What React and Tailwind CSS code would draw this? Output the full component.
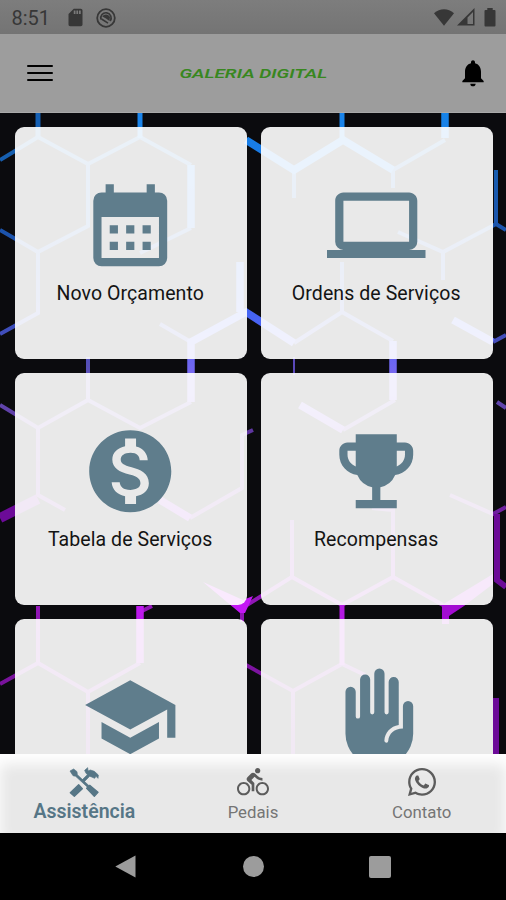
import React from "react";
import {
  MdMonetizationOn,
  MdEmojiEvents,
  MdSchool,
  MdDirectionsBike,
  MdNotifications,
  MdSdCard,
} from "react-icons/md";
import { FaWhatsapp } from "react-icons/fa";

const CalendarIcon = ({ className }) => (
  <svg viewBox="0 0 24 24" fill="currentColor" className={className}>
    <path d="M9 12V14H7V12H9M13 12V14H11V12H13M17 12V14H15V12H17M9 16V18H7V16H9M13 16V18H11V16H13M17 16V18H15V16H17M5 4H6V2H8V4H16V2H18V4H19A2 2 0 0 1 21 6V20A2 2 0 0 1 19 22H5A2 2 0 0 1 3 20V6A2 2 0 0 1 5 4M19 20V10H5V20H19Z" />
  </svg>
);

const LaptopIcon = ({ className }) => (
  <svg viewBox="0 0 24 24" fill="currentColor" className={className}>
    <path d="M4 6H20V16H4M20 18A2 2 0 0 0 22 16V6C22 4.89 21.1 4 20 4H4C2.89 4 2 4.89 2 6V16A2 2 0 0 0 4 18H0V20H24V18H20Z" />
  </svg>
);

const HandIcon = ({ className }) => (
  <svg viewBox="0 0 24 24" fill="currentColor" className={className}>
    <path d="M4.5 5.8a1.25 1.25 0 0 1 2.5 0v6a.53.53 0 0 0 1.06 0V2.8a1.23 1.23 0 0 1 2.46 0v8a.5.5 0 0 0 1 0V1.4a1.25 1.25 0 0 1 2.5 0v9.4a.5.5 0 0 0 1 0V3.4a1.23 1.23 0 0 1 2.46 0V13.9c-2 .3-3.4 1.9-3.5 3.8a.45.45 0 0 0 .95.05c.1-1.7 1.5-3 3.57-3V9.3a1.25 1.25 0 0 1 2.5 0V16a8.25 8 0 0 1-16.5 0z" />
  </svg>
);

const ToolsIcon = ({ className }) => (
  <svg
    viewBox="0 0 90 90"
    fill="currentColor"
    stroke="currentColor"
    strokeWidth="2"
    strokeLinejoin="round"
    className={className}
  >
    <path d="M3 12L14 6L24 14L25 23L62 58L57 62L20 28L12 26Z" />
    <path d="M53 64L62 55L87 76L76 88Z" strokeWidth="4" />
    <path d="M4 77L29 53L40 65L16 88Z" strokeWidth="4" />
    <path d="M56 2L57 12L64 9L76 13L88 24L87 34L81 28L77 34L66 29L62 28L45 45L39 39L55 23L50 17L47 10Z" />
  </svg>
);

const cards = [
  { label: "Novo Orçamento", icon: CalendarIcon },
  { label: "Ordens de Serviços", icon: LaptopIcon },
  { label: "Tabela de Serviços", icon: MdMonetizationOn },
  { label: "Recompensas", icon: MdEmojiEvents },
  { icon: MdSchool },
  { icon: HandIcon },
];

const thinLines = [
  "M38 137L0 160M38 137L88 164L140 137M140 137L191 165M38 252L0 230M88 164V226L38 252V313L0 334M191 228L140 253",
  "M393 170L445 140M294 170V198M393 170V188M342 262V312L393 341M294 343L342 312M398 232L443 252L496 224L506 230M443 252V280M496 170V224M493 342L506 335",
  "M160 324L191 342M88 357V400L38 428L0 405M38 428V495L65 510M88 400L140 428L191 402M190 518L242 488V435L253 430M343 430L395 400",
  "M292 520V577L242 608V622M292 577L342 605L393 577V510L372 508M393 577L443 605M450 495L493 514L506 507M497 402L506 408",
  "M38 606V663L0 684M38 663L88 692L140 663M88 692V754M246 665L293 691L342 664L365 675M293 691V754M140 612L152 606",
];

const thickLines = [
  "M191 165V228M246 140L294 170L343 140L393 170M445 112V138M191 372V342L246 312L294 343M240 262V312",
  "M191 372V402M393 341V400M453 320L493 342M300 405L343 430M160 500L190 518M140 606V663",
];

function HexBackground() {
  return (
    <svg
      viewBox="0 113 506 641"
      fill="none"
      className="absolute inset-0 h-full w-full"
      preserveAspectRatio="none"
    >
      <defs>
        <linearGradient id="neon" gradientUnits="userSpaceOnUse" x1="0" y1="112" x2="0" y2="754">
          <stop offset="0" stopColor="#1583e8" />
          <stop offset="0.22" stopColor="#2468e0" />
          <stop offset="0.33" stopColor="#4a63f5" />
          <stop offset="0.42" stopColor="#7e68ee" />
          <stop offset="0.55" stopColor="#7a2cc0" />
          <stop offset="0.77" stopColor="#c01af0" />
          <stop offset="1" stopColor="#7d10a8" />
        </linearGradient>
      </defs>
      <g stroke="url(#neon)">
        {thinLines.map((d) => (
          <path key={d} d={d} strokeWidth="4" strokeOpacity="0.75" />
        ))}
        {thickLines.map((d) => (
          <path key={d} d={d} strokeWidth="7.5" />
        ))}
      </g>
      {/* brighter tubes at the top edge */}
      <path d="M38 110V138" stroke="#1560b4" strokeWidth="5" />
      <path d="M140 110V138M342 110V140" stroke="#1a84ea" strokeWidth="5" />
      <path d="M294 357V375" stroke="#5a48b8" strokeWidth="2" />
      <path d="M342 604V665" stroke="#b41ae2" strokeWidth="5" />
      <path d="M0 518L38 499" stroke="#6c0b98" strokeWidth="10" />
      <path d="M497 514V580L506 587M496 698V754" stroke="#6c0b98" strokeWidth="6" />
      <path d="M203 582L243 600L253 596L245 613L240 613Z" fill="#c416f5" />
      <path d="M442 605L493 574V584L464 606L449 616V624H442Z" fill="#a30cd2" />
    </svg>
  );
}

function StatusBar() {
  return (
    <div className="flex h-[34px] items-center bg-gradient-to-b from-[#7d7d7d] to-[#747474] pl-[11.5px] pr-[10px] text-[#373737]">
      <span className="mt-[2px] text-[20px] leading-none">8:51</span>
      <MdSdCard className="ml-[15px] h-[21px] w-[21px]" />
      <svg viewBox="0 0 20 20" className="ml-[10px] mt-px h-5 w-5" fill="none" stroke="currentColor">
        <circle cx="10" cy="10" r="8.8" strokeWidth="1.8" />
        <path d="M5 11.5A5.2 5.2 0 1 1 14.2 13" strokeWidth="1.7" />
        <path d="M6.3 8.5C8 5.5 12.5 5.7 14 9L13.4 13L10 10.4Z" fill="currentColor" stroke="none" />
        <path d="M5.5 11L12 15.2" strokeWidth="1.6" />
      </svg>
      <svg viewBox="0 0 20 17" className="ml-auto h-[17px] w-5" fill="currentColor">
        <path d="M0 4.2C6-1 14-1 20 4.2L10 16.7Z" />
      </svg>
      <svg viewBox="0 0 18 18" className="ml-[3px] h-[18px] w-[18px]" fill="currentColor">
        <path d="M17.5 0V17.5H0ZM16 4L10.5 9.5V16H16Z" fillRule="evenodd" />
      </svg>
      <svg viewBox="0 0 12 19" className="ml-[9px] h-[19px] w-3" fill="currentColor">
        <path d="M3.3 0H8.7V2H10.5Q11.5 2 11.5 3V17.5Q11.5 18.5 10.5 18.5H1.5Q.5 18.5 .5 17.5V3Q.5 2 1.5 2H3.3Z" />
      </svg>
    </div>
  );
}

function Header() {
  return (
    <header className="flex h-[79px] items-center justify-between border-b border-[#aaa] bg-[#9d9d9d] pl-[27px] pr-[17px]">
      <button className="flex w-[26px] flex-col gap-[5px]">
        <span className="h-[2px] rounded-full bg-black" />
        <span className="h-[2px] rounded-full bg-black" />
        <span className="h-[2px] rounded-full bg-black" />
      </button>
      <h1 className="ml-[-4px] scale-x-[1.47] text-[13px] font-semibold italic leading-none text-[#38871f]">
        GALERIA DIGITAL
      </h1>
      <button>
        <MdNotifications className="h-8 w-8 text-black" />
      </button>
    </header>
  );
}

function Card({ label, icon: Icon }) {
  return (
    <button className="flex h-[232px] flex-col items-center rounded-[9px] bg-white/91 pt-[48.5px]">
      <Icon className="h-[98.5px] w-[98.5px] text-[#5f7d8c]" />
      {label && (
        <span className="mt-[7.5px] pr-px text-[19.5px] leading-6 tracking-[0.08px] text-[#141414]">
          {label}
        </span>
      )}
    </button>
  );
}

function TabBar() {
  return (
    <nav className="grid h-[79px] grid-cols-3 bg-[#e8e8e8] text-[#5c5c5c] shadow-[inset_0_10px_14px_0px_#ffffff]">
      <div className="flex flex-col items-center pt-[13px] text-[#567686]">
        <ToolsIcon className="h-[30px] w-[30px]" />
        <span className="mt-[3px] text-[19.5px] font-semibold leading-6">Assistência</span>
      </div>
      <div className="flex flex-col items-center pt-3">
        <MdDirectionsBike className="h-8 w-8" />
        <span className="text-[16.8px] leading-7 text-[#757575]">Pedais</span>
      </div>
      <div className="flex flex-col items-center pt-3">
        <FaWhatsapp className="h-8 w-8" />
        <span className="text-[16.8px] leading-7 text-[#757575]">Contato</span>
      </div>
    </nav>
  );
}

function SystemNav() {
  return (
    <div className="grid h-[67px] grid-cols-[1fr_22px_1fr] items-center bg-black text-[#9c9c9c]">
      <svg viewBox="0 0 21 23" className="ml-[115px] h-[23px] w-[21px]" fill="currentColor">
        <path d="M20.5 .5V22.5L.3 11.5Z" />
      </svg>
      <span className="ml-px h-[21px] w-[21px] rounded-full bg-[#9c9c9c]" />
      <span className="ml-[105px] h-[22px] w-[22px] rounded-[2px] bg-[#9c9c9c]" />
    </div>
  );
}

export default function App() {
  return (
    <div className="flex h-[900px] w-[506px] flex-col overflow-hidden bg-black font-['Roboto',sans-serif]">
      <StatusBar />
      <Header />
      <main className="relative min-h-0 flex-1 overflow-hidden bg-[#0b0b0e]">
        <HexBackground />
        <div className="relative grid grid-cols-2 gap-[14px] pl-[14.7px] pr-[13.3px] pt-[14px]">
          {cards.map((card, i) => (
            <Card key={i} {...card} />
          ))}
        </div>
      </main>
      <TabBar />
      <SystemNav />
    </div>
  );
}
